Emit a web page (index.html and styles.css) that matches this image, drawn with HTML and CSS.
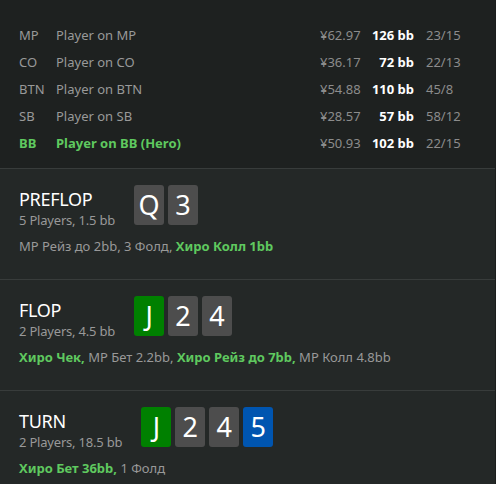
FILE: index.html
```html
<!DOCTYPE html>
<html lang="ru">

<head>
    <meta charset="UTF-8" />
    <meta name="viewport" content="width=device-width, initial-scale=1.0" />
    <title>Раздача</title>
    <link rel="stylesheet" href="styles.css">
</head>

<body>
    <section class="players">
        <div class="player">
            <span class="pos">MP</span>
            <span class="name">Player on MP</span>
            <span class="money">¥62.97</span>
            <span class="stack">126 bb</span>
            <span class="stats">23/15</span>
        </div>
        <div class="player">
            <span class="pos">CO</span>
            <span class="name">Player on CO</span>
            <span class="money">¥36.17</span>
            <span class="stack">72 bb</span>
            <span class="stats">22/13</span>
        </div>
        <div class="player">
            <span class="pos">BTN</span>
            <span class="name">Player on BTN</span>
            <span class="money">¥54.88</span>
            <span class="stack">110 bb</span>
            <span class="stats">45/8</span>
        </div>
        <div class="player">
            <span class="pos">SB</span>
            <span class="name">Player on SB</span>
            <span class="money">¥28.57</span>
            <span class="stack">57 bb</span>
            <span class="stats">58/12</span>
        </div>
        <div class="player hero">
            <span class="pos">BB</span>
            <span class="name">Player on BB (Hero)</span>
            <span class="money">¥50.93</span>
            <span class="stack">102 bb</span>
            <span class="stats">22/15</span>
        </div>
    </section>

    <section class="street">
        <div class="street-head">
            <div class="street-info">
                <h2>PREFLOP</h2>
                <p>5 Players, 1.5 bb</p>
            </div>
            <div class="cards">
                <span class="card">Q</span>
                <span class="card">3</span>
            </div>
        </div>
        <p class="actions">МР Рейз до 2bb, 3 Фолд, <b>Хиро Колл 1bb</b></p>
    </section>

    <section class="street">
        <div class="street-head">
            <div class="street-info">
                <h2>FLOP</h2>
                <p>2 Players, 4.5 bb</p>
            </div>
            <div class="cards">
                <span class="card green">J</span>
                <span class="card">2</span>
                <span class="card">4</span>
            </div>
        </div>
        <p class="actions"><b>Хиро Чек,</b> МР Бет 2.2bb, <b>Хиро Рейз до 7bb,</b> МР Колл 4.8bb</p>
    </section>

    <section class="street">
        <div class="street-head">
            <div class="street-info">
                <h2>TURN</h2>
                <p>2 Players, 18.5 bb</p>
            </div>
            <div class="cards">
                <span class="card green">J</span>
                <span class="card">2</span>
                <span class="card">4</span>
                <span class="card blue">5</span>
            </div>
        </div>
        <p class="actions"><b>Хиро Бет 36bb,</b> 1 Фолд</p>
    </section>
</body>

</html>
```

FILE: styles.css
```css
body {
    font-family: "Segoe UI", "Noto Sans", sans-serif;
    font-size: 13px;
    margin: 0;
    padding: 0;
    background: #242827;
    color: #999;
    border-right: 1px solid #1b1e1d;
}

/* Список игроков */
.players {
    background: #1e2120;
    padding: 21px 26px 12px 19px;
    border-bottom: 1px solid #383c3b;
}

.player {
    display: grid;
    grid-template-columns: 37px 1fr 48px 58px 43px;
    height: 27px;
    align-items: center;
    white-space: nowrap;
}

.money {
    color: #8c8c8c;
}

.stack {
    color: #fff;
    font-weight: bold;
    text-align: right;
    padding-right: 12px;
}

.stats {
    color: #8c8c8c;
}

.hero .pos,
.hero .name {
    color: #5fc95f;
    font-weight: bold;
}

/* Улицы */
.street {
    padding: 16px 19px 0;
    height: 111px;
    box-sizing: border-box;
    border-bottom: 1px solid #383c3b;
}

.street:last-child {
    border-bottom: none;
}

.street-head {
    display: flex;
    gap: 19px;
}

.street-info h2 {
    margin: 2px 0 0;
    font-size: 18px;
    font-weight: normal;
    color: #fff;
    line-height: 24px;
    letter-spacing: -0.3px;
}

.street-info p {
    margin: 0;
    line-height: 18px;
    letter-spacing: -0.2px;
}

.cards {
    display: flex;
    gap: 4px;
}

.card {
    width: 30px;
    height: 40px;
    border-radius: 3px;
    background: #4d4d4d;
    color: #fff;
    font-size: 27px;
    line-height: 40px;
    text-align: center;
}

.card.green {
    background: #008000;
}

.card.blue {
    background: #0055b0;
}

.actions {
    margin: 8px 0 0;
    line-height: 18px;
}

.actions b {
    color: #5fc95f;
}
```
